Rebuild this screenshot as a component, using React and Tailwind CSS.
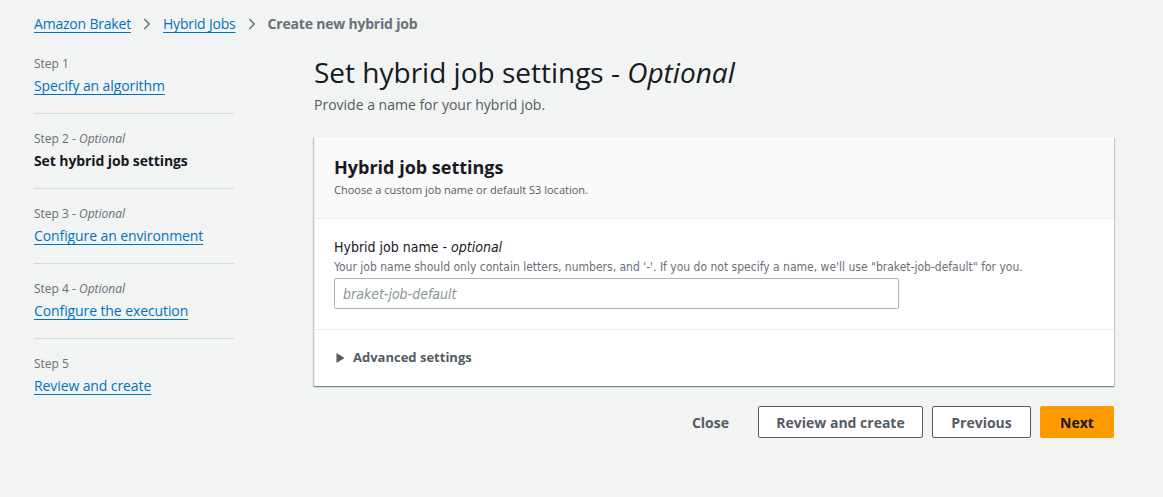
import { ChevronRight } from 'lucide-react'

const steps = [
  { n: 'Step 1', label: 'Specify an algorithm' },
  { n: 'Step 2', opt: true, label: 'Set hybrid job settings', active: true },
  { n: 'Step 3', opt: true, label: 'Configure an environment' },
  { n: 'Step 4', opt: true, label: 'Configure the execution' },
  { n: 'Step 5', label: 'Review and create' },
]

const narrow = "font-['DejaVu_Sans_Condensed','Liberation_Sans_Narrow','Open_Sans',sans-serif]"

export default function App() {
  return (
    <div className="min-h-[497px] w-full bg-[#f2f3f3] text-[#16191f] font-['Open_Sans',sans-serif]">
      {/* Breadcrumbs */}
      <div className="flex items-center gap-[7px] px-[34px] pt-[14px] text-[14px] leading-[20px] tracking-[-0.2px]">
        <a className="text-[#0073bb] underline underline-offset-[3px]">Amazon Braket</a>
        <ChevronRight className="h-[18px] w-[18px] text-[#687078]" strokeWidth={2} />
        <a className="text-[#0073bb] underline underline-offset-[3px]">Hybrid Jobs</a>
        <ChevronRight className="h-[18px] w-[18px] text-[#687078]" strokeWidth={2} />
        <span className="font-bold text-[#687078]">Create new hybrid job</span>
      </div>

      <div className="flex pt-[21px]">
        {/* Steps nav */}
        <nav className="ml-[34px] w-[200px] shrink-0 pt-[1px]">
          {steps.map((s, i) => (
            <div
              key={s.n}
              className={`${i > 0 ? 'border-t border-[#d5dbdb] pt-[17px]' : ''} ${i < steps.length - 1 ? 'pb-[16px]' : ''}`}
            >
              <div className="text-[12px] leading-[16px] text-[#687078]">
                {s.n}
                {s.opt && (
                  <>
                    {' - '}
                    <i>Optional</i>
                  </>
                )}
              </div>
              <div className="mt-[3px] text-[14px] leading-[22px] tracking-[-0.1px]">
                {s.active ? (
                  <span className="font-bold text-[#16191f]">{s.label}</span>
                ) : (
                  <a className="text-[#0073bb] underline underline-offset-[3px]">{s.label}</a>
                )}
              </div>
            </div>
          ))}
        </nav>

        {/* Main */}
        <main className="ml-[80px] -mt-[1px] w-[800px]">
          <h1 className="text-[28px] leading-[36px] font-normal text-[#16191f]">
            Set hybrid job settings - <i>Optional</i>
          </h1>
          <p className="mt-[5px] text-[14px] leading-[20px] text-[#545b64]">Provide a name for your hybrid job.</p>

          <div className="mt-[22px] border-l border-[#eaeded] bg-white shadow-[0_1px_1px_0_rgba(0,28,36,0.3),1px_1px_1px_0_rgba(0,28,36,0.15),-1px_1px_1px_0_rgba(0,28,36,0.15)]">
            <div className="h-[82px] border-b border-[#eaeded] bg-[#fafafa] px-[19px] pt-[19px]">
              <h2 className="text-[18px] leading-[22px] font-bold text-[#16191f]">Hybrid job settings</h2>
              <p className="mt-[4px] text-[11px] leading-[16px] text-[#545b64]">Choose a custom job name or default S3 location.</p>
            </div>

            <div className={`h-[111px] border-b border-[#eaeded] px-[19px] pt-[17px] ${narrow}`}>
              <div className="text-[14px] leading-[22px] text-[#16191f]">
                Hybrid job name - <i>optional</i>
              </div>
              <div className="mt-[1px] text-[12px] leading-[16px] text-[#687078]">
                Your job name should only contain letters, numbers, and '-'. If you do not specify a name, we'll use "braket-job-default" for you.
              </div>
              <input
                className={`mt-[3px] h-[31px] w-[565px] rounded-[2px] border border-[#aab7b8] bg-white px-[8px] text-[14px] italic outline-none placeholder:text-[#879596] ${narrow}`}
                placeholder="braket-job-default"
              />
            </div>

            <div className="flex h-[56px] items-center gap-[8px] px-[21px]">
              <svg width="9" height="10" viewBox="0 0 9 10" className="text-[#545b64]">
                <path d="M0.5 0 L8.5 5 L0.5 10 Z" fill="currentColor" />
              </svg>
              <span className="text-[13px] font-bold text-[#545b64]">Advanced settings</span>
            </div>
          </div>

          <div className="mt-[20px] flex items-center justify-end gap-[9px] text-[14px] font-bold">
            <button className="h-[31px] px-[20px] text-[#545b64]">Close</button>
            <button className="h-[32px] w-[165px] rounded-[2px] border border-[#545b64] bg-white text-[#545b64]">Review and create</button>
            <button className="h-[32px] w-[99px] rounded-[2px] border border-[#545b64] bg-white text-[#545b64]">Previous</button>
            <button className="h-[32px] w-[74px] rounded-[2px] bg-[#ff9900] text-[#16191f]">Next</button>
          </div>
        </main>
      </div>
    </div>
  )
}
